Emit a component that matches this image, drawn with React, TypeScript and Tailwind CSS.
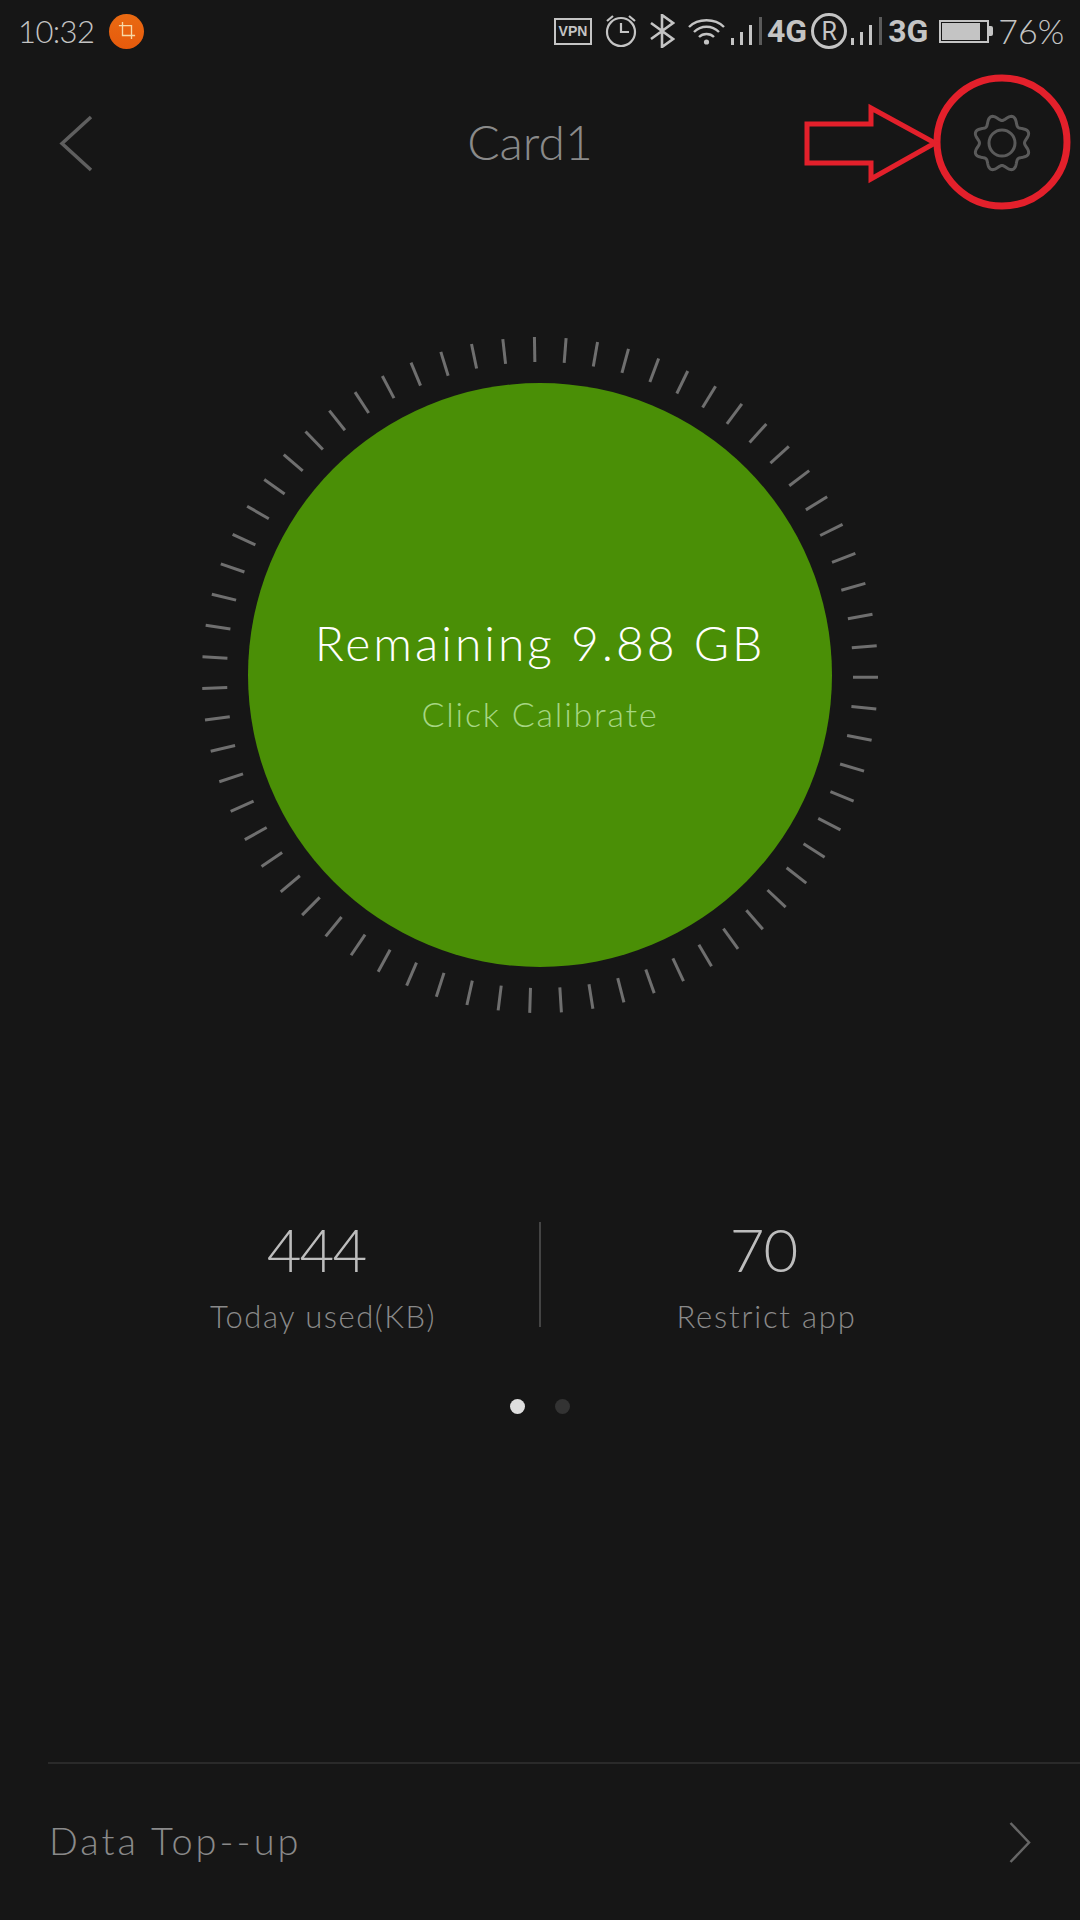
import React from 'react';

const thin = 'font-["Lato","Liberation_Sans",sans-serif] font-light';

// dial around the green circle
const TICKS = 67;
const tickLines = Array.from({ length: TICKS }, (_, i) => {
  const a = ((i * 360) / TICKS + 0.4) * (Math.PI / 180);
  return {
    x1: 338 + 313 * Math.cos(a),
    y1: 338 + 313 * Math.sin(a),
    x2: 338 + 338 * Math.cos(a),
    y2: 338 + 338 * Math.sin(a),
  };
});

// eight soft teeth, dip at 12 o'clock
const gearPath = (() => {
  const pts: string[] = [];
  for (let i = 0; i < 240; i++) {
    const t = (i / 240) * 2 * Math.PI;
    const r = 25.5 + 3 * Math.cos(8 * t + Math.PI);
    pts.push(`${(30 + r * Math.sin(t)).toFixed(2)} ${(30 - r * Math.cos(t)).toFixed(2)}`);
  }
  return `M${pts.join('L')}Z`;
})();

const SignalBars = () => (
  <svg width="31" height="28" viewBox="0 0 31 28">
    <rect x="0" y="21" width="3" height="7" fill="#c4c4c4" />
    <rect x="9" y="15" width="3" height="13" fill="#c4c4c4" />
    <rect x="18" y="8" width="3" height="20" fill="#c4c4c4" />
    <rect x="28" y="0" width="3" height="28" fill="#5a5a5a" />
  </svg>
);

const App: React.FC = () => {
  return (
    <div className={`w-[1080px] h-[1920px] bg-[#161616] flex flex-col overflow-hidden ${thin}`}>
      {/* Status bar */}
      <div className="h-[62px] flex items-center pl-[18px] text-[#c4c4c4]">
        <span className="w-[75px] text-[31px] leading-none tracking-[-0.6px] font-light whitespace-nowrap">10:32</span>
        <div className="ml-[16px] w-[35px] h-[35px] rounded-full bg-gradient-to-b from-[#e96a12] to-[#e65a0c] flex items-center justify-center">
          <svg width="18" height="18" viewBox="0 0 20 20" fill="none" stroke="#f7d9a8" strokeWidth="1.5">
            <path d="M1 4H15V19M5 0V15H19" />
          </svg>
        </div>
        <div className="ml-[410px] w-[38px] h-[27px] border-[2px] border-[#c4c4c4] flex items-center justify-center">
          <span className='font-["Liberation_Sans"] font-bold text-[14px] leading-none'>VPN</span>
        </div>
        <svg className="ml-[12px]" width="34" height="34" viewBox="0 0 34 34" fill="none" stroke="#c4c4c4" strokeWidth="2.2">
          <circle cx="17" cy="18" r="14" />
          <path d="M17 9V18H25M3 7L9 2M31 7L25 2" />
        </svg>
        <svg className="ml-[12px]" width="25" height="34" viewBox="0 0 25 34" fill="none" stroke="#c4c4c4" strokeWidth="2.6">
          <path d="M1 9L23 25L12 33V1L23 9L1 25" />
        </svg>
        <svg className="ml-[13px]" width="37" height="27" viewBox="0 0 37 27" fill="none" stroke="#c4c4c4" strokeWidth="2.4">
          <path d="M1 9C10 0 27 0 36 9M6 14C13 7 24 7 31 14M11 19C15 15 22 15 26 19" />
          <circle cx="18.5" cy="24" r="2.6" fill="#c4c4c4" stroke="none" />
        </svg>
        <div className="ml-[6px]"><SignalBars /></div>
        <span className='ml-[5px] font-["Roboto"] font-bold text-[32px] leading-none'>4G</span>
        <div className='ml-[4px] w-[36px] h-[36px] rounded-full border-[3px] border-[#c4c4c4] flex items-center justify-center font-["Roboto"] font-normal text-[25px] leading-none'>R</div>
        <div className="ml-[4px]"><SignalBars /></div>
        <span className='ml-[6px] font-["Roboto"] font-bold text-[32px] leading-none'>3G</span>
        <div className="ml-[11px] w-[50px] h-[23px] border-[2px] border-[#c4c4c4] p-[1px] flex">
          <div className="w-[38px] bg-[#c4c4c4]" />
        </div>
        <div className="w-[4px] h-[10px] bg-[#c4c4c4] rounded-r-[2px]" />
        <span className="ml-[5px] text-[34px] leading-none font-light whitespace-nowrap">76%</span>
      </div>

      {/* Title row */}
      <div className="relative h-[162px] flex items-center justify-center pb-[2px]">
        <svg className="absolute left-[59px] top-[53px]" width="34" height="57" viewBox="0 0 34 57" fill="none" stroke="#5f5f5f" strokeWidth="3.5">
          <path d="M32 2L3 28.5L32 55" />
        </svg>
        <span className="mr-[20px] text-[48px] leading-none text-[#8a8a8a]">Card1</span>
        <svg className="absolute left-[972px] top-[51px]" width="60" height="60" viewBox="0 0 60 60" fill="none" stroke="#5a5a5a" strokeWidth="3">
          <path d={gearPath} />
          <circle cx="30" cy="30" r="13" />
        </svg>
        {/* red annotation */}
        <svg className="absolute left-[800px] top-[10px]" width="275" height="145" viewBox="0 0 275 145" fill="none" stroke="#e3202b">
          <ellipse cx="202" cy="70" rx="65" ry="64" strokeWidth="7" />
          <path d="M7 52H71V36L135 71L71 107V91H7Z" strokeWidth="5" />
        </svg>
      </div>

      {/* Gauge */}
      <div className="mt-[113px] flex justify-center">
        <div className="relative w-[676px] h-[676px] flex items-center justify-center">
          <svg className="absolute inset-0" width="676" height="676" viewBox="0 0 676 676" stroke="#6f6f6f" strokeWidth="3">
            {tickLines.map((l, i) => (
              <line key={i} x1={l.x1} y1={l.y1} x2={l.x2} y2={l.y2} />
            ))}
          </svg>
          <div className="w-[584px] h-[584px] rounded-full bg-[#4a8f06] flex flex-col items-center pt-[230px]">
            <span className="text-[48px] leading-[60px] text-white tracking-[3px] whitespace-nowrap">Remaining 9.88 GB</span>
            <span className="mt-[21px] text-[34px] leading-[40px] text-[#a6d683] tracking-[1.8px] whitespace-nowrap">Click Calibrate</span>
          </div>
        </div>
      </div>

      {/* Stats */}
      <div className="mt-[201px] flex items-center justify-center">
        <div className="w-[445px] flex flex-col items-center pl-[5px]">
          <span className="text-[60px] leading-[70px] text-[#bdbdbd] tracking-[-2px] pr-[6px] whitespace-nowrap">444</span>
          <span className="mt-[14px] ml-[8px] text-[31px] leading-[36px] text-[#8a8a8a] tracking-[1.5px] whitespace-nowrap">Today used(KB)</span>
        </div>
        <div className="w-[2px] h-[105px] bg-[#444444]" />
        <div className="w-[445px] flex flex-col items-center">
          <span className="text-[60px] leading-[70px] text-[#bdbdbd] tracking-[-1px] whitespace-nowrap">70</span>
          <span className="mt-[14px] text-[31px] leading-[36px] text-[#8a8a8a] tracking-[1.8px] pl-[6px] whitespace-nowrap">Restrict app</span>
        </div>
      </div>

      {/* Pager dots */}
      <div className="mt-[65px] flex justify-center gap-[30px]">
        <div className="w-[15px] h-[15px] rounded-full bg-[#dedede]" />
        <div className="w-[15px] h-[15px] rounded-full bg-[#333333]" />
      </div>

      {/* Bottom row */}
      <div className="mt-auto ml-[48px] h-[158px] border-t-[2px] border-[#2a2a2a] flex items-center justify-between pr-[49px]">
        <span className="ml-[1px] mb-[4px] text-[38px] leading-none text-[#8a8a8a] tracking-[3px]">Data Top--up</span>
        <svg width="22" height="41" viewBox="0 0 22 41" fill="none" stroke="#666666" strokeWidth="2.5">
          <path d="M1.5 1L20 20.5L1.5 40" />
        </svg>
      </div>
    </div>
  );
};

export default App;
